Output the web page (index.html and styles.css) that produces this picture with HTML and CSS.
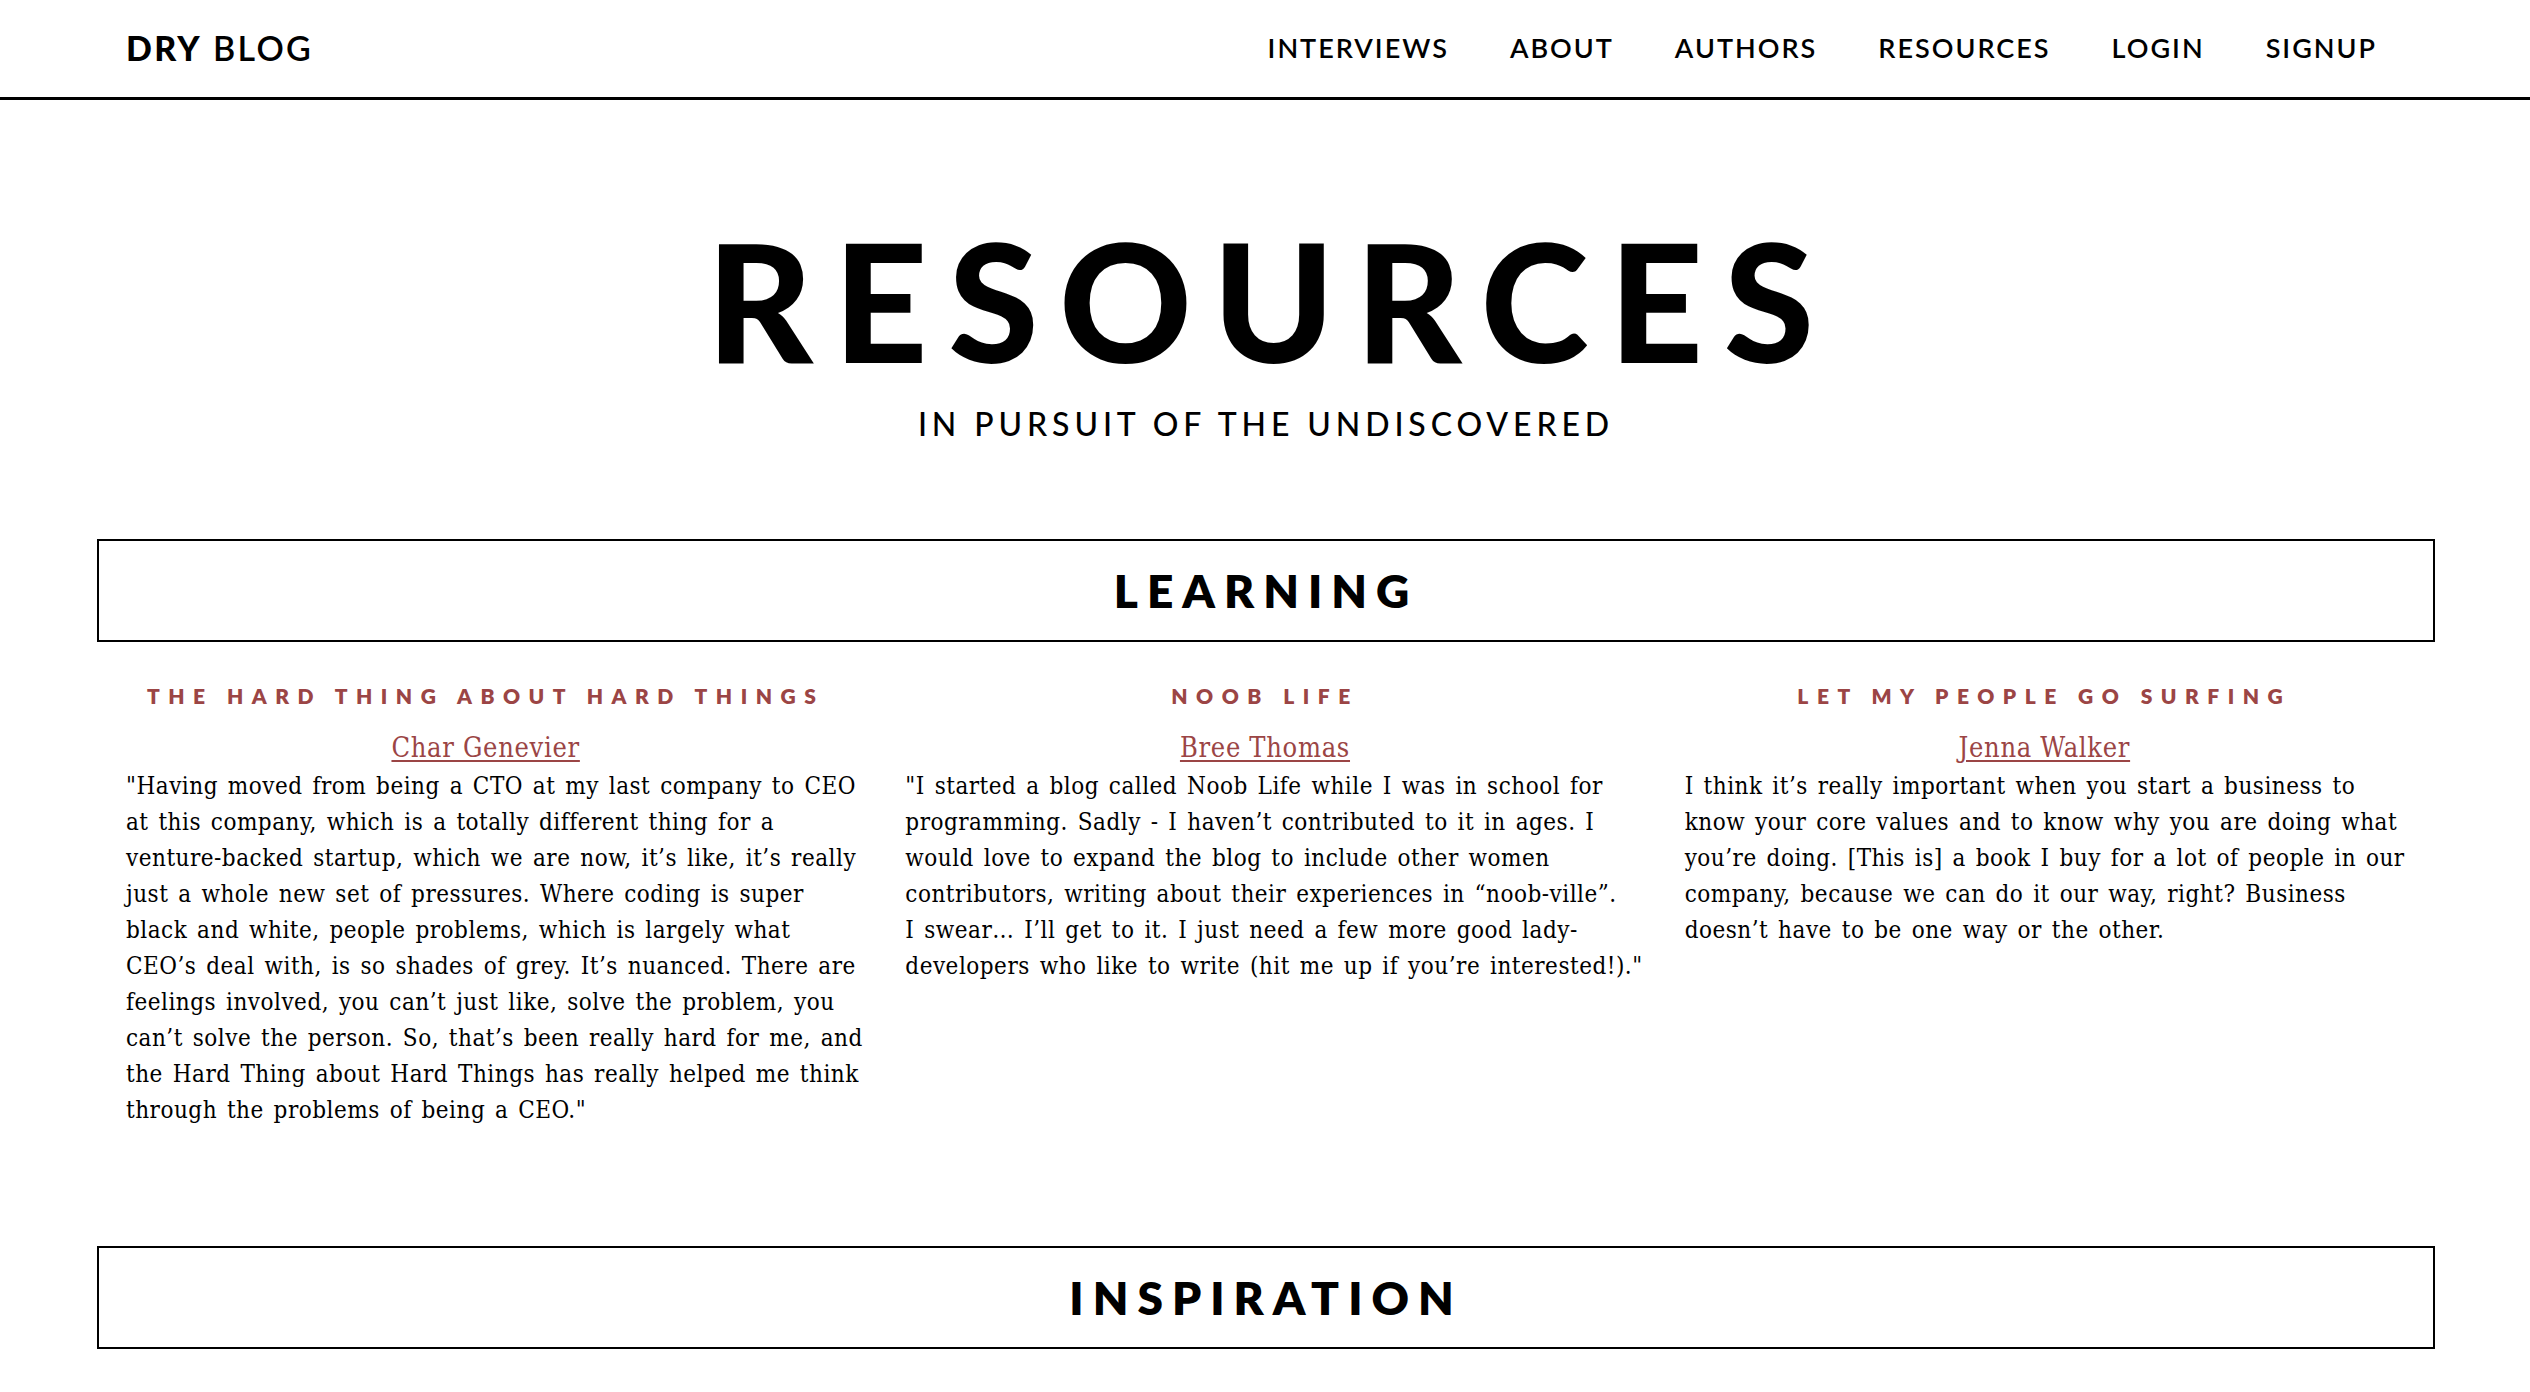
FILE: index.html
```html
<!DOCTYPE html>
<html lang="en">
<head>
<meta charset="utf-8">
<title>Resources - DRY Blog</title>
<link rel="stylesheet" href="styles.css">
</head>
<body>
<header class="site-header">
  <a class="logo" href="#"><span class="logo-bold">DRY</span> <span class="logo-light">BLOG</span></a>
  <nav class="nav">
    <a href="#">INTERVIEWS</a>
    <a href="#">ABOUT</a>
    <a href="#">AUTHORS</a>
    <a href="#">RESOURCES</a>
    <a href="#">LOGIN</a>
    <a href="#">SIGNUP</a>
  </nav>
</header>

<main class="page">
  <section class="hero">
    <h1 class="hero-title">RESOURCES</h1>
    <p class="hero-sub">IN PURSUIT OF THE UNDISCOVERED</p>
  </section>

  <section class="category">
    <h2 class="category-title">LEARNING</h2>
    <div class="cards">
      <article class="card">
        <h3 class="card-title">THE HARD THING ABOUT HARD THINGS</h3>
        <p class="card-author"><a href="#">Char Genevier</a></p>
        <p class="card-text">"Having moved from being a CTO at my last company to CEO at this company, which is a totally different thing for a venture-backed startup, which we are now, it’s like, it’s really just a whole new set of pressures. Where coding is super black and white, people problems, which is largely what CEO’s deal with, is so shades of grey. It’s nuanced. There are feelings involved, you can’t just like, solve the problem, you can’t solve the person. So, that’s been really hard for me, and the Hard Thing about Hard Things has really helped me think through the problems of being a CEO."</p>
      </article>
      <article class="card">
        <h3 class="card-title">NOOB LIFE</h3>
        <p class="card-author"><a href="#">Bree Thomas</a></p>
        <p class="card-text">"I started a blog called Noob Life while I was in school for programming. Sadly - I haven’t contributed to it in ages. I would love to expand the blog to include other women contributors, writing about their experiences in “noob-ville”. I&nbsp;swear… I’ll get to it. I just need a few more good lady-developers who like to write (hit me up if you’re interested!)."</p>
      </article>
      <article class="card">
        <h3 class="card-title">LET MY PEOPLE GO SURFING</h3>
        <p class="card-author"><a href="#">Jenna Walker</a></p>
        <p class="card-text">I think it’s really important when you start a business to know your core values and to know why you are doing what you’re doing. [This is] a book I buy for a lot of people in our company, because we can do it our way, right? Business doesn’t have to be one way or the other.</p>
      </article>
    </div>
  </section>

  <section class="category">
    <h2 class="category-title">INSPIRATION</h2>
  </section>
</main>
</body>
</html>
```

FILE: styles.css
```css
* {
  box-sizing: border-box;
}

body {
  margin: 0;
  background: #ffffff;
  color: #000000;
  font-family: "Lato", "Liberation Sans", sans-serif;
}

a {
  color: inherit;
  text-decoration: none;
}

/* Header */
.site-header {
  height: 100px;
  border-bottom: 3px solid #000;
  display: flex;
  align-items: center;
  justify-content: space-between;
  padding: 0 153px 0 126px;
}

.logo {
  font-size: 34px;
  letter-spacing: 2.3px;
  line-height: 1.2;
}

.logo-bold {
  font-weight: 900;
}

.logo-light {
  font-weight: 600;
}

.nav {
  display: flex;
  gap: 61px;
}

.nav a {
  font-size: 27px;
  font-weight: 600;
  letter-spacing: 2px;
  line-height: 1.2;
}

/* Page */
.page {
  padding: 0 95px 200px 97px;
}

.hero {
  text-align: center;
  padding-top: 118px;
}

.hero-title {
  margin: 0;
  padding-left: 9px;
  font-size: 164px;
  font-weight: 900;
  line-height: 1;
  letter-spacing: 20.5px;
}

.hero-sub {
  margin: 26px 0 0;
  font-size: 32px;
  font-weight: 500;
  line-height: 1;
  letter-spacing: 4.9px;
}

.category {
  margin-top: 99px;
}

.category + .category {
  margin-top: 118px;
}

.category-title {
  margin: 0;
  height: 103px;
  border: 2px solid #000;
  display: flex;
  align-items: center;
  justify-content: center;
  font-size: 46px;
  font-weight: 800;
  letter-spacing: 9px;
  line-height: 1;
}

.cards {
  display: grid;
  grid-template-columns: repeat(3, 1fr);
}

.card {
  padding: 0 11px 0 29px;
}

.card-title {
  margin: 41px 0 0;
  padding-right: 20px;
  text-align: center;
  color: #9b4545;
  font-size: 21px;
  font-weight: 800;
  letter-spacing: 8.5px;
  line-height: 1.2;
}

.card-author {
  margin: 20px 0 0;
  padding-right: 20px;
  text-align: center;
  font-family: "DejaVu Serif Condensed", "DejaVu Serif", "Liberation Serif", serif;
  font-stretch: condensed;
  font-size: 27px;
  letter-spacing: 0.7px;
  line-height: 39px;
}

.card-author a {
  color: #9b4545;
  text-decoration: underline;
  text-decoration-thickness: 2px;
  text-underline-offset: 3px;
}

.card-text {
  margin: 1px 0 0;
  font-family: "DejaVu Serif Condensed", "DejaVu Serif", "Liberation Serif", serif;
  font-stretch: condensed;
  font-size: 24px;
  letter-spacing: 0.5px;
  word-spacing: 2.5px;
  line-height: 36px;
}
```
